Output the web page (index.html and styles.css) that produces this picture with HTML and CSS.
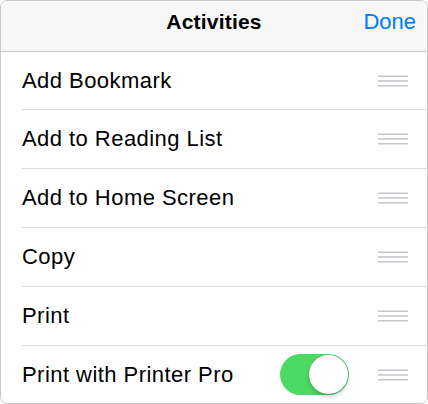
FILE: index.html
```html
<!DOCTYPE html>
<html>
<head>
<meta charset="utf-8">
<link rel="stylesheet" href="styles.css">
</head>
<body>
<div class="sheet">
  <div class="header">
    <span class="spacer"></span>
    <span class="title">Activities</span>
    <span class="done">Done</span>
  </div>
  <ul class="list">
    <li class="row"><div class="cell"><span class="label">Add Bookmark</span><svg class="grip" width="30" height="12" viewBox="0 0 30 12"><rect x="0" y="0.5" width="30" height="1.5"/><rect x="0" y="5.2" width="30" height="1.5"/><rect x="0" y="10" width="30" height="1.5"/></svg></div></li>
    <li class="row"><div class="cell"><span class="label">Add to Reading List</span><svg class="grip" width="30" height="12" viewBox="0 0 30 12"><rect x="0" y="0.5" width="30" height="1.5"/><rect x="0" y="5.2" width="30" height="1.5"/><rect x="0" y="10" width="30" height="1.5"/></svg></div></li>
    <li class="row"><div class="cell"><span class="label">Add to Home Screen</span><svg class="grip" width="30" height="12" viewBox="0 0 30 12"><rect x="0" y="0.5" width="30" height="1.5"/><rect x="0" y="5.2" width="30" height="1.5"/><rect x="0" y="10" width="30" height="1.5"/></svg></div></li>
    <li class="row"><div class="cell"><span class="label">Copy</span><svg class="grip" width="30" height="12" viewBox="0 0 30 12"><rect x="0" y="0.5" width="30" height="1.5"/><rect x="0" y="5.2" width="30" height="1.5"/><rect x="0" y="10" width="30" height="1.5"/></svg></div></li>
    <li class="row"><div class="cell"><span class="label">Print</span><svg class="grip" width="30" height="12" viewBox="0 0 30 12"><rect x="0" y="0.5" width="30" height="1.5"/><rect x="0" y="5.2" width="30" height="1.5"/><rect x="0" y="10" width="30" height="1.5"/></svg></div></li>
    <li class="row"><div class="cell"><span class="label">Print with Printer Pro</span><span class="switch"><span class="knob"></span></span><svg class="grip" width="30" height="12" viewBox="0 0 30 12"><rect x="0" y="0.5" width="30" height="1.5"/><rect x="0" y="5.2" width="30" height="1.5"/><rect x="0" y="10" width="30" height="1.5"/></svg></div></li>
  </ul>
</div>
</body>
</html>
```
FILE: styles.css
```css
html, body {
  margin: 0;
  padding: 0;
  background: #ffffff;
}
.sheet {
  width: 428px;
  height: 404px;
  box-sizing: border-box;
  border: 1px solid #c9c9c9;
  border-radius: 7px;
  overflow: hidden;
  background: #ffffff;
  font-family: "Liberation Sans", Arial, sans-serif;
  color: #000;
}
.header {
  height: 51px;
  box-sizing: border-box;
  padding: 9px 11px 0 11px;
  background: #f7f7f7;
  border-bottom: 1px solid #c8c8cc;
  display: grid;
  grid-template-columns: 1fr auto 1fr;
  align-items: baseline;
}
.title {
  font-size: 21px;
  font-weight: bold;
  line-height: 24px;
  letter-spacing: 0.2px;
}
.done {
  justify-self: end;
  font-size: 22px;
  line-height: 24px;
  color: #007aff;
}
.list {
  list-style: none;
  margin: 0;
  padding: 0;
}
.row {
  padding-left: 21px;
}
.cell {
  height: 59px;
  box-sizing: border-box;
  display: flex;
  align-items: center;
  border-bottom: 1px solid #dcdce0;
  padding-right: 19px;
}
.row:first-child .cell {
  height: 58px;
}
.row:last-child .cell {
  border-bottom: none;
  height: 57px;
}
.label {
  flex: 1;
  font-size: 22px;
  line-height: 24px;
  letter-spacing: 0.45px;
}
.grip {
  display: block;
  fill: #c5c5ca;
}
.switch {
  position: relative;
  width: 69px;
  height: 41px;
  border-radius: 21px;
  background: #4cd964;
  margin-right: 29px;
  box-sizing: border-box;
}
.knob {
  position: absolute;
  top: 1px;
  right: 1px;
  width: 39px;
  height: 39px;
  border-radius: 50%;
  background: #ffffff;
  box-shadow: 0 3px 4px rgba(0, 0, 0, 0.18), 0 0 0 0.5px rgba(0, 0, 0, 0.12);
}
```
